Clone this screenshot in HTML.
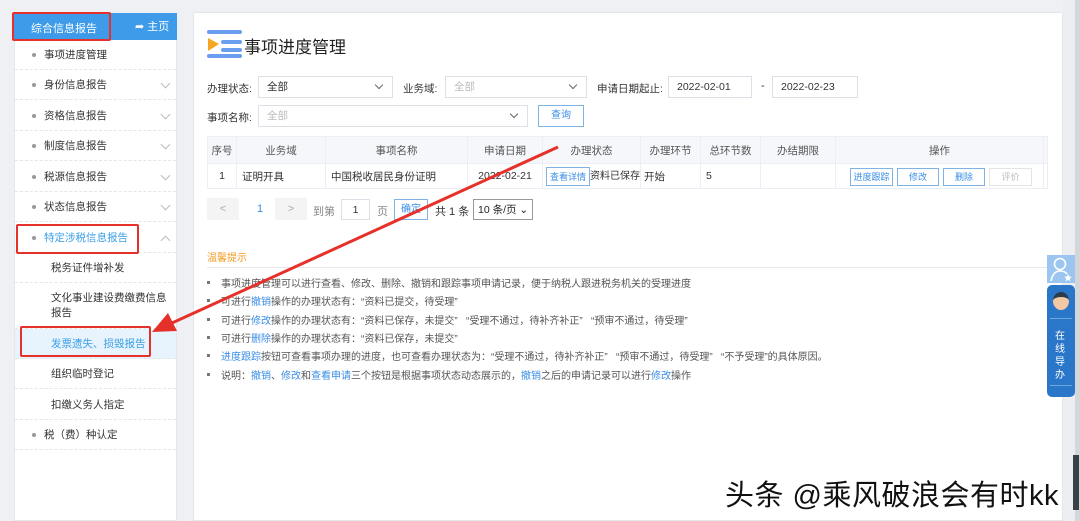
<!DOCTYPE html>
<html><head><meta charset="utf-8"><style>
*{margin:0;padding:0;box-sizing:border-box}
body{width:1080px;height:521px;overflow:hidden;background:#eef0f3;font-family:"Liberation Sans","Noto Sans CJK SC",sans-serif;font-size:11px;color:#333;position:relative}
.a{position:absolute}
.side{left:14px;top:13px;width:163px;height:508px;background:#fff;border:1px solid #e3e6ea}
.mi{position:absolute;left:0;width:161px;height:30px;border-bottom:1px dashed #e6e6e6;line-height:30px;font-size:10.5px}
.mi .d{position:absolute;left:17px;top:13px;width:4px;height:4px;border-radius:50%;background:#999}
.mi .t{position:absolute;left:29px}
.mi .s{position:absolute;left:36px}
.chev{position:absolute;right:7px;top:10px;width:7px;height:7px;border-right:1px solid #bbb;border-bottom:1px solid #bbb;transform:rotate(45deg)}
.main{left:193px;top:12px;width:870px;height:509px;background:#fff;border:1px solid #e3e6ea}
.inp{position:absolute;height:22px;border:1px solid #dcdfe6;background:#fff;font-size:10.5px;line-height:20px;padding-left:8px}
.sel:after{content:"";position:absolute;right:10px;top:5px;width:5px;height:5px;border-right:1px solid #666;border-bottom:1px solid #666;transform:rotate(45deg)}
.btn{position:absolute;border:1px solid #7fb2e5;color:#3a8ee6;background:#fff;font-size:9px;text-align:center}
table{border-collapse:collapse;position:absolute;left:207px;top:136px;font-size:10.5px;table-layout:fixed;width:840px}
td{border:1px solid #ebeef5;height:25px;padding:0 5px;white-space:nowrap;overflow:hidden}
tr.h td{background:#f5f7fa;text-align:center;color:#555;height:27px}
.tip{position:absolute;left:207px;font-size:10px;color:#555}
.tip:before{content:"";position:absolute;left:0;top:6px;width:3px;height:3px;background:#777}
.tip span{position:absolute;left:14px;white-space:nowrap}
.b{color:#3a8ee6;font-style:normal}
</style></head><body>
<div class="a side">
 <div class="a" style="left:-1px;top:-1px;width:163px;height:27px;background:#3d9be9"></div>
 <div class="a" style="left:16px;top:6px;color:#fff;font-size:11px">综合信息报告</div>
 <div class="a" style="left:120px;top:4px;color:#fff;font-size:11px">➦ 主页</div>
 <div class="mi" style="top:26px"><i class="d"></i><span class="t">事项进度管理</span></div>
 <div class="mi" style="top:56px"><i class="d"></i><span class="t">身份信息报告</span><i class="chev"></i></div>
 <div class="mi" style="top:87px"><i class="d"></i><span class="t">资格信息报告</span><i class="chev"></i></div>
 <div class="mi" style="top:117px"><i class="d"></i><span class="t">制度信息报告</span><i class="chev"></i></div>
 <div class="mi" style="top:148px"><i class="d"></i><span class="t">税源信息报告</span><i class="chev"></i></div>
 <div class="mi" style="top:178px"><i class="d"></i><span class="t">状态信息报告</span><i class="chev"></i></div>
 <div class="mi" style="top:209px;color:#3a9ee6"><i class="d"></i><span class="t">特定涉税信息报告</span><i class="chev" style="transform:rotate(-135deg);top:14px"></i></div>
 <div class="mi" style="top:239px"><span class="s">税务证件增补发</span></div>
 <div class="mi" style="top:269px;height:46px;line-height:15px"><span class="s" style="top:8px;width:122px">文化事业建设费缴费信息报告</span></div>
 <div class="mi" style="top:315px;background:#e8f4fd;color:#3a9ee6"><span class="s">发票遗失、损毁报告</span></div>
 <div class="mi" style="top:345px"><span class="s">组织临时登记</span></div>
 <div class="mi" style="top:376px"><span class="s">扣缴义务人指定</span></div>
 <div class="mi" style="top:406px"><i class="d"></i><span class="t">税（费）种认定</span></div>
</div>
<div class="a" style="left:12px;top:12px;width:99px;height:29px;border:2px solid #e5312a;border-radius:2px"></div>
<div class="a" style="left:16px;top:224px;width:123px;height:30px;border:2px solid #e5312a;border-radius:2px"></div>
<div class="a" style="left:20px;top:326px;width:131px;height:31px;border:2px solid #e5312a;border-radius:2px"></div>
<div class="a main"></div>
<svg class="a" style="left:207px;top:29px" width="37" height="30"><rect x="0" y="1" width="35" height="4" rx="2" fill="#6a9ff0"/><rect x="14" y="11" width="21" height="4" rx="2" fill="#6a9ff0"/><rect x="14" y="19" width="21" height="4" rx="2" fill="#6a9ff0"/><rect x="0" y="25" width="35" height="4" rx="2" fill="#6a9ff0"/><path d="M1 9 L12 15 L1 22Z" fill="#f5a623"/></svg>
<div class="a" style="left:244px;top:33px;font-size:17px;color:#222">事项进度管理</div>
<div class="a" style="left:207px;top:81px;font-size:10.5px">办理状态:</div>
<div class="inp sel" style="left:258px;top:76px;width:135px">全部</div>
<div class="a" style="left:403px;top:81px;font-size:10.5px">业务域:</div>
<div class="inp sel" style="left:445px;top:76px;width:142px;color:#bbb">全部</div>
<div class="a" style="left:597px;top:81px;font-size:10.5px">申请日期起止:</div>
<div class="inp" style="left:668px;top:76px;width:84px">2022-02-01</div>
<div class="a" style="left:761px;top:80px">-</div>
<div class="inp" style="left:772px;top:76px;width:86px">2022-02-23</div>
<div class="a" style="left:207px;top:110px;font-size:10.5px">事项名称:</div>
<div class="inp sel" style="left:258px;top:105px;width:270px;color:#bbb">全部</div>
<div class="btn" style="left:538px;top:105px;width:46px;height:22px;line-height:20px;font-size:10px">查询</div>
<table>
<colgroup><col style="width:29px"><col style="width:89px"><col style="width:142px"><col style="width:75px"><col style="width:98px"><col style="width:60px"><col style="width:60px"><col style="width:75px"><col style="width:208px"><col style="width:4px"></colgroup>
<tr class="h"><td style="padding:0">序号</td><td>业务域</td><td>事项名称</td><td>申请日期</td><td>办理状态</td><td style="padding:0">办理环节</td><td style="padding:0">总环节数</td><td>办结期限</td><td>操作</td><td style="padding:0"></td></tr>
<tr><td style="text-align:center;padding:0">1</td><td>证明开具</td><td>中国税收居民身份证明</td><td style="text-align:center;padding:0">2022-02-21</td><td style="padding:0 0 0 3px;font-size:10px"><span style="display:inline-block;border:1px solid #7fb2e5;color:#3a8ee6;font-size:9px;padding:2px 3px;vertical-align:middle">查看详情</span>资料已保存</td><td style="padding:0 3px">开始</td><td>5</td><td></td><td style="position:relative"><span class="btn" style="left:14px;top:4px;width:43px;height:18px;line-height:16px">进度跟踪</span><span class="btn" style="left:61px;top:4px;width:42px;height:18px;line-height:16px">修改</span><span class="btn" style="left:107px;top:4px;width:42px;height:18px;line-height:16px">删除</span><span class="btn" style="left:153px;top:4px;width:43px;height:18px;line-height:16px;border-color:#e4e4e4;color:#bbb">评价</span></td><td style="padding:0"></td></tr>
</table>
<div class="a" style="left:207px;top:198px;width:32px;height:22px;background:#f4f4f5;text-align:center;line-height:22px;color:#aaa">&lt;</div>
<div class="a" style="left:257px;top:203px;color:#3a8ee6">1</div>
<div class="a" style="left:275px;top:198px;width:32px;height:22px;background:#f4f4f5;text-align:center;line-height:22px;color:#aaa">&gt;</div>
<div class="a" style="left:313px;top:203px;color:#888">到第</div>
<div class="inp" style="left:341px;top:199px;width:29px;height:21px;text-align:center;padding:0">1</div>
<div class="a" style="left:377px;top:203px;color:#888">页</div>
<div class="btn" style="left:394px;top:199px;width:34px;height:21px;line-height:19px;font-size:10px">确定</div>
<div class="a" style="left:435px;top:203px">共 1 条</div>
<div class="inp" style="left:473px;top:199px;width:60px;height:21px;padding-left:4px;border-color:#999;color:#222">10 条/页 ⌄</div>
<div class="a" style="left:207px;top:249px;color:#f39a21;font-size:10px">温馨提示</div>
<div class="a" style="left:207px;top:267px;width:856px;border-top:1px solid #e8e8e8"></div>
<div class="tip" style="top:275px"><span>事项进度管理可以进行查看、修改、删除、撤销和跟踪事项申请记录，便于纳税人跟进税务机关的受理进度</span></div>
<div class="tip" style="top:293px"><span>可进行<i class="b">撤销</i>操作的办理状态有：“资料已提交，待受理”</span></div>
<div class="tip" style="top:312px"><span>可进行<i class="b">修改</i>操作的办理状态有：“资料已保存，未提交”&nbsp;&nbsp;&nbsp;“受理不通过，待补齐补正”&nbsp;&nbsp;&nbsp;“预审不通过，待受理”</span></div>
<div class="tip" style="top:330px"><span>可进行<i class="b">删除</i>操作的办理状态有：“资料已保存，未提交”</span></div>
<div class="tip" style="top:348px"><span><i class="b">进度跟踪</i>按钮可查看事项办理的进度，也可查看办理状态为：“受理不通过，待补齐补正”&nbsp;&nbsp;&nbsp;“预审不通过，待受理”&nbsp;&nbsp;&nbsp;“不予受理”的具体原因。</span></div>
<div class="tip" style="top:367px"><span>说明：<i class="b">撤销</i>、<i class="b">修改</i>和<i class="b">查看申请</i>三个按钮是根据事项状态动态展示的，<i class="b">撤销</i>之后的申请记录可以进行<i class="b">修改</i>操作</span></div>
<div class="a" style="left:1063px;top:0;width:12px;height:521px;background:#eceef1"></div>
<div class="a" style="left:1075px;top:0;width:5px;height:521px;background:#d4d6d9"></div>
<div class="a" style="left:1073px;top:455px;width:6px;height:55px;background:#3a4048"></div>
<div class="a" style="left:1047px;top:255px;width:28px;height:28px;background:#9cc6f0"></div>
<svg class="a" style="left:1049px;top:256px" width="24" height="26"><circle cx="11" cy="8" r="5.5" fill="none" stroke="#fff" stroke-width="1.6"/><path d="M2 25 Q4 15 11 15 Q16 15 18 18" fill="none" stroke="#fff" stroke-width="1.6"/><path d="M19 18 l1.2 2.5 2.6 .3 -2 1.8 .6 2.6 -2.4 -1.3 -2.4 1.3 .6 -2.6 -2 -1.8 2.6 -.3z" fill="#fff"/></svg>
<div class="a" style="left:1047px;top:285px;width:28px;height:112px;background:#2a77c9;border-radius:5px"></div>
<div class="a" style="left:1053px;top:292px;width:16px;height:18px;border-radius:50%;background:#f3c9a4;border-top:5px solid #2d3a4a"></div>
<div class="a" style="left:1050px;top:318px;width:22px;border-top:1px solid #6ea6e0"></div>
<div class="a" style="left:1055px;top:330px;color:#fff;font-size:10px;line-height:13px;width:12px">在线导办</div>
<div class="a" style="left:1050px;top:385px;width:22px;border-top:1px solid #6ea6e0"></div>
<svg class="a" style="left:0;top:0" width="1080" height="521"><line x1="558" y1="147" x2="172" y2="323" stroke="#e5312a" stroke-width="3"/><path d="M152 332 L168 313 L177 331Z" fill="#e5312a"/></svg>
<div class="a" style="left:725px;top:472px;font-size:29px;color:#111;white-space:nowrap;letter-spacing:0.5px;text-shadow:1px 1px 0 #fff,-1px -1px 0 #fff,1px -1px 0 #fff,-1px 1px 0 #fff">头条 @乘风破浪会有时kk</div>
</body></html>
